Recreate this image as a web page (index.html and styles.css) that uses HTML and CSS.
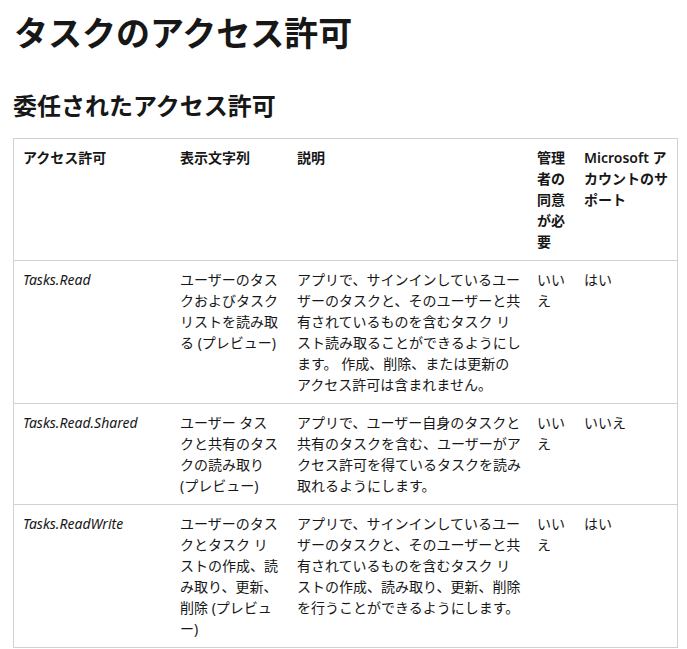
FILE: index.html
```html
<!DOCTYPE html>
<html lang="ja">
<head>
<meta charset="utf-8">
<title>タスクのアクセス許可</title>
<link rel="stylesheet" href="styles.css">
</head>
<body>
<main class="content">
  <h1 class="title">タスクのアクセス許可</h1>
  <h2 class="subtitle">委任されたアクセス許可</h2>
  <table class="perm-table">
    <thead>
      <tr>
        <th class="c1">アクセス許可</th>
        <th class="c2">表示文字列</th>
        <th class="c3">説明</th>
        <th class="c4">管理者の同意が必要</th>
        <th class="c5">Microsoft アカウントのサポート</th>
      </tr>
    </thead>
    <tbody>
      <tr>
        <td><em>Tasks.Read</em></td>
        <td>ユーザーのタスクおよびタスク リストを読み取る (プレビュー)</td>
        <td>アプリで、サインインしているユーザーのタスクと、そのユーザーと共有されているものを含むタスク リスト読み取ることができるようにします。 作成、削除、または更新のアクセス許可は含まれません。</td>
        <td>いいえ</td>
        <td>はい</td>
      </tr>
      <tr>
        <td><em>Tasks.Read.Shared</em></td>
        <td>ユーザー タスクと共有のタスクの読み取り (プレビュー)</td>
        <td>アプリで、ユーザー自身のタスクと共有のタスクを含む、ユーザーがアクセス許可を得ているタスクを読み取れるようにします。</td>
        <td>いいえ</td>
        <td>いいえ</td>
      </tr>
      <tr>
        <td><em>Tasks.ReadWrite</em></td>
        <td>ユーザーのタスクとタスク リストの作成、読み取り、更新、削除 (プレビュー)</td>
        <td>アプリで、サインインしているユーザーのタスクと、そのユーザーと共有されているものを含むタスク リストの作成、読み取り、更新、削除を行うことができるようにします。</td>
        <td>いいえ</td>
        <td>はい</td>
      </tr>
    </tbody>
  </table>
</main>
</body>
</html>
```

FILE: styles.css
```css
html, body {
  margin: 0;
  padding: 0;
  background: #ffffff;
}

body {
  font-family: "Noto Sans", "Noto Sans CJK JP", sans-serif;
  color: #171717;
  font-size: 14px;
  line-height: 21px;
}

.content {
  padding: 0 9px 0 13px;
}

.title {
  margin: 11px 0 0 1px;
  font-size: 34px;
  line-height: 44px;
  font-weight: 700;
}

.subtitle {
  margin: 35px 0 0 0;
  font-size: 24px;
  line-height: 32px;
  font-weight: 600;
}

.perm-table {
  margin-top: 16px;
  width: 665px;
  table-layout: fixed;
  border-collapse: separate;
  border-spacing: 0;
  border: 1px solid #d1d1d1;
}

.perm-table th,
.perm-table td {
  box-sizing: border-box;
  padding: 8px 7px 8px 9px;
  text-align: left;
  vertical-align: top;
  font-size: 14px;
  line-height: 21px;
  line-break: loose;
}

.perm-table th {
  font-weight: 600;
}

.perm-table td {
  border-top: 1px solid #d1d1d1;
  font-weight: 400;
}

.perm-table em {
  font-style: italic;
}

.c1 { width: 157px; }
.c2 { width: 117px; }
.c3 { width: 240px; }
.c4 { width: 47px; }
.c5 { width: 102px; }
```
